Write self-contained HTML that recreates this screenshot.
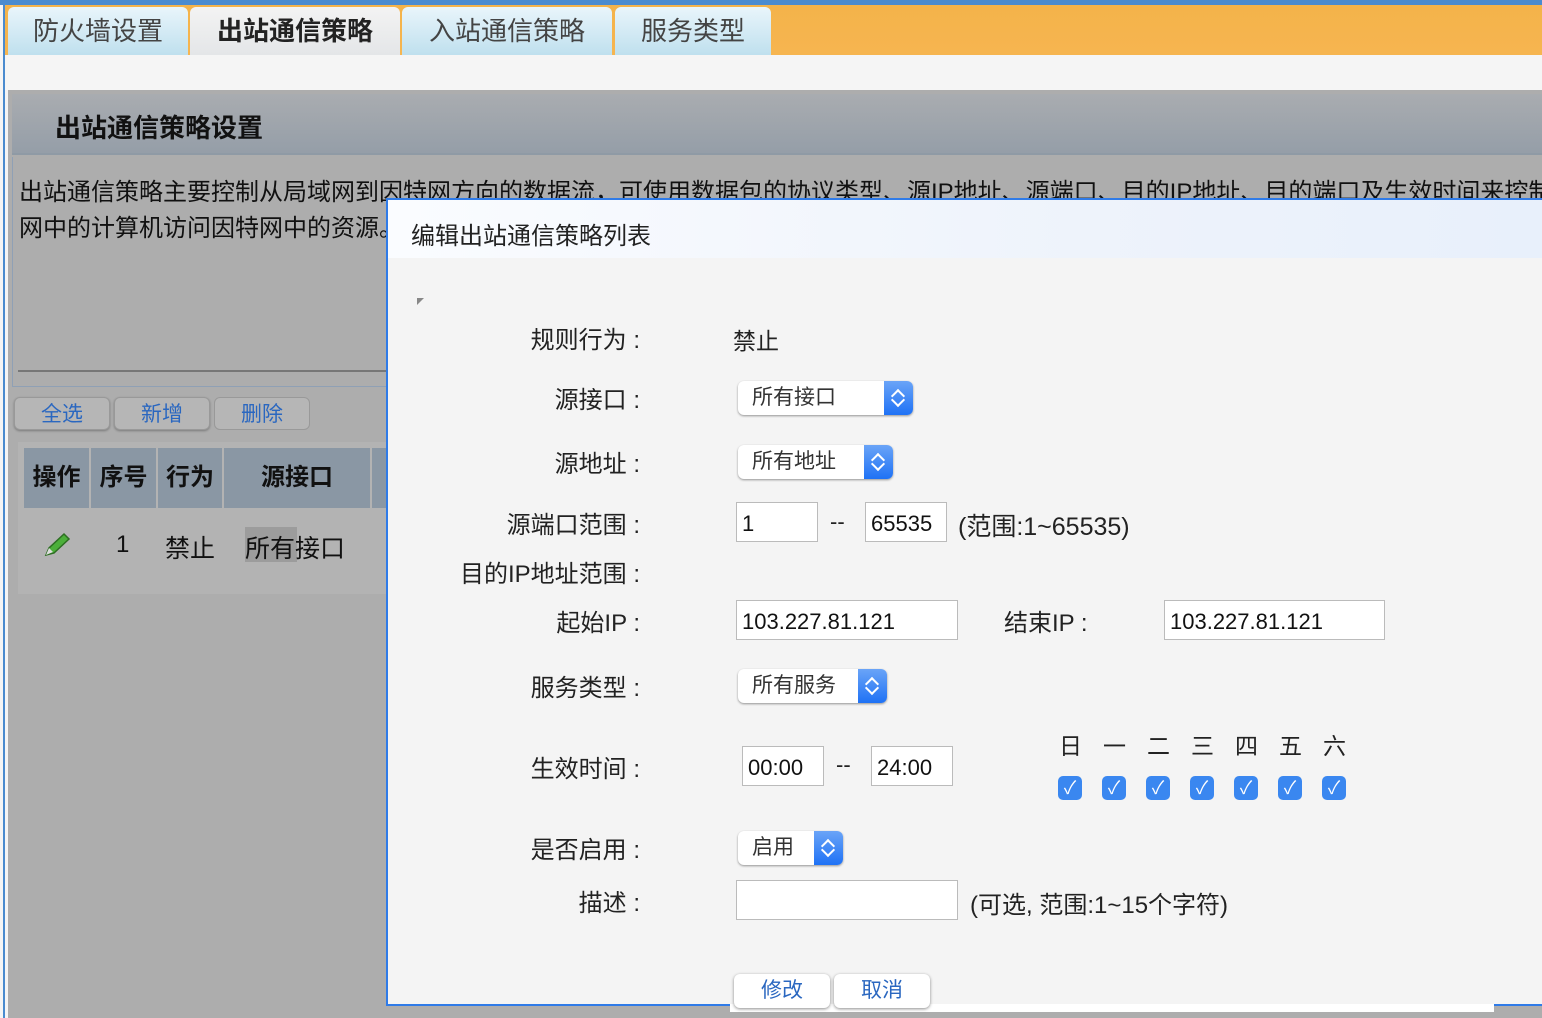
<!DOCTYPE html>
<html><head><meta charset="utf-8"><style>
*{margin:0;padding:0;box-sizing:border-box}
body{width:1542px;height:1018px;overflow:hidden;position:relative;background:#f5f5f5;font-family:"Liberation Sans","Noto Sans CJK SC",sans-serif;color:#222}
.a{position:absolute;white-space:nowrap}
.tab{position:absolute;top:7px;height:48px;border-radius:6px 6px 0 0;background:linear-gradient(#e9f5fb,#bfe0ee);font-size:26px;color:#444;text-align:center;line-height:48px}
.lbl{position:absolute;right:902px;font-size:24px;color:#222;white-space:nowrap}
.sel{position:absolute;height:34px;background:#fff;border-radius:6px;box-shadow:0 1px 2px rgba(0,0,0,.4);font-size:21px;line-height:34px;padding-left:14px;color:#333}
.sel i{position:absolute;right:0;top:0;width:29px;height:34px;border-radius:0 6px 6px 0;background:linear-gradient(#6aa4f7,#1f72f5)}
.sel i:before,.sel i:after{content:"";position:absolute;left:9px;width:8px;height:8px;border:solid #fff;border-width:2px 0 0 2px}
.sel i:before{top:10px;transform:rotate(45deg)}
.sel i:after{top:14px;transform:rotate(225deg)}
.inp{position:absolute;height:40px;background:#fff;border:1px solid #bbb;font-size:22px;line-height:42px;padding-left:5px;color:#111}
.cb{position:absolute;top:776px;width:24px;height:24px;border-radius:5px;background:#3a87f0;color:#fff;font-size:18px;text-align:center;line-height:24px}
.day{position:absolute;top:727px;font-size:23px;color:#222}
.btn{position:absolute;border-radius:6px;font-size:21px;color:#2a67c0;text-align:center}
</style></head><body>
<div class="a" style="left:0;top:0;width:1542px;height:5px;background:#4a8bcf"></div>
<div class="a" style="left:3px;top:0;width:2px;height:1018px;background:#4a8bcf"></div>
<div class="a" style="left:5px;top:5px;width:1537px;height:50px;background:linear-gradient(#f4b34a,#f6b550)"></div>
<div class="tab" style="left:8px;width:180px">防火墙设置</div>
<div class="tab" style="left:190px;width:210px;background:linear-gradient(#f3f3f3,#e4e6e8);color:#222;font-weight:bold">出站通信策略</div>
<div class="tab" style="left:402px;width:210px">入站通信策略</div>
<div class="tab" style="left:615px;width:156px">服务类型</div>

<div class="a" style="left:8px;top:90px;width:1534px;height:928px;background:#adadad"></div>
<div class="a" style="left:12px;top:94px;width:1530px;height:61px;background:linear-gradient(#a9acb0,#959ea8);border-bottom:2px solid #8f9aa5"></div>
<div class="a" style="left:55px;top:108px;font-size:26px;font-weight:bold;color:#111">出站通信策略设置</div>
<div class="a" style="left:12px;top:157px;width:376px;height:230px;border-left:1px solid #8fa0b5;border-bottom:1px solid #8fa0b5"></div>
<div class="a" style="left:19px;top:175px;font-size:24px;color:#111;line-height:36px">出站通信策略主要控制从局域网到因特网方向的数据流，可使用数据包的协议类型、源IP地址、源端口、目的IP地址、目的端口及生效时间来控制<br>网中的计算机访问因特网中的资源。</div>
<div class="a" style="left:18px;top:370px;width:370px;height:2px;background:#777"></div>
<div class="btn" style="left:14px;top:397px;width:96px;height:33px;line-height:33px;background:#b6b6b6;border:1px solid #999;box-shadow:0 1px 2px rgba(0,0,0,.3)">全选</div>
<div class="btn" style="left:114px;top:397px;width:96px;height:33px;line-height:33px;background:#b6b6b6;border:1px solid #999;box-shadow:0 1px 2px rgba(0,0,0,.3)">新增</div>
<div class="btn" style="left:214px;top:397px;width:96px;height:33px;line-height:33px;background:#b6b6b6;border:1px solid #999">删除</div>
<div class="a" style="left:18px;top:442px;width:370px;height:152px;background:#b3b3b3"></div>
<div class="a" style="left:24px;top:448px;width:65px;height:60px;background:#8a97a4;font-size:24px;font-weight:bold;line-height:60px;text-align:center;color:#111">操作</div>
<div class="a" style="left:91px;top:448px;width:65px;height:60px;background:#8a97a4;font-size:24px;font-weight:bold;line-height:60px;text-align:center;color:#111">序号</div>
<div class="a" style="left:158px;top:448px;width:64px;height:60px;background:#8a97a4;font-size:24px;font-weight:bold;line-height:60px;text-align:center;color:#111">行为</div>
<div class="a" style="left:224px;top:448px;width:146px;height:60px;background:#8a97a4;font-size:24px;font-weight:bold;line-height:60px;text-align:center;color:#111">源接口</div>
<div class="a" style="left:372px;top:448px;width:16px;height:60px;background:#8a97a4"></div>
<svg class="a" style="left:42px;top:531px" width="30" height="28"><path d="M4 24 L7 17 L22 3 L27 8 L12 22 Z" fill="#4caf3a" stroke="#2d6e22" stroke-width="1.5"/><path d="M4 24 L7 17 L11 21Z" fill="#ddd"/></svg>
<div class="a" style="left:116px;top:531px;font-size:24px;color:#111">1</div>
<div class="a" style="left:165px;top:529px;font-size:25px;color:#111">禁止</div>
<div class="a" style="left:245px;top:527px;width:52px;height:35px;background:#9c9c9c"></div>
<div class="a" style="left:245px;top:529px;font-size:25px;color:#111">所有接口</div>

<div class="a" style="left:386px;top:198px;width:1160px;height:808px;border:2px solid #2f7be8;border-right:none;background:#f4f4f4"></div>
<div class="a" style="left:388px;top:200px;width:1154px;height:58px;background:linear-gradient(90deg,#fafcff,#eef3fb 60%,#e8f0fb)"></div>
<div class="a" style="left:411px;top:216px;font-size:24px;color:#222">编辑出站通信策略列表</div>
<div class="a" style="left:417px;top:298px;width:0;height:0;border-top:7px solid #888;border-right:7px solid transparent"></div>
<div class="a" style="left:730px;top:1004px;width:764px;height:8px;background:#fff"></div>

<div class="lbl" style="top:320px">规则行为 :</div>
<div class="a" style="left:733px;top:322px;font-size:23px">禁止</div>
<div class="lbl" style="top:380px">源接口 :</div>
<div class="sel" style="left:738px;top:381px;width:175px">所有接口<i></i></div>
<div class="lbl" style="top:444px">源地址 :</div>
<div class="sel" style="left:738px;top:445px;width:155px">所有地址<i></i></div>
<div class="lbl" style="top:505px">源端口范围 :</div>
<div class="inp" style="left:736px;top:502px;width:82px">1</div>
<div class="a" style="left:830px;top:509px;font-size:22px">--</div>
<div class="inp" style="left:865px;top:502px;width:82px">65535</div>
<div class="a" style="left:958px;top:507px;font-size:25px">(范围:1~65535)</div>
<div class="lbl" style="top:554px">目的IP地址范围 :</div>
<div class="lbl" style="top:603px">起始IP :</div>
<div class="inp" style="left:736px;top:600px;width:222px">103.227.81.121</div>
<div class="a" style="left:1004px;top:603px;font-size:24px">结束IP :</div>
<div class="inp" style="left:1164px;top:600px;width:221px">103.227.81.121</div>
<div class="lbl" style="top:668px">服务类型 :</div>
<div class="sel" style="left:738px;top:669px;width:149px">所有服务<i></i></div>
<div class="lbl" style="top:749px">生效时间 :</div>
<div class="inp" style="left:742px;top:746px;width:82px">00:00</div>
<div class="a" style="left:836px;top:752px;font-size:22px">--</div>
<div class="inp" style="left:871px;top:746px;width:82px">24:00</div>
<div class="day" style="left:1059px">日</div><div class="day" style="left:1103px">一</div><div class="day" style="left:1147px">二</div><div class="day" style="left:1191px">三</div><div class="day" style="left:1235px">四</div><div class="day" style="left:1279px">五</div><div class="day" style="left:1323px">六</div>
<div class="cb" style="left:1058px">✓</div><div class="cb" style="left:1102px">✓</div><div class="cb" style="left:1146px">✓</div><div class="cb" style="left:1190px">✓</div><div class="cb" style="left:1234px">✓</div><div class="cb" style="left:1278px">✓</div><div class="cb" style="left:1322px">✓</div>
<div class="lbl" style="top:830px">是否启用 :</div>
<div class="sel" style="left:738px;top:831px;width:105px">启用<i></i></div>
<div class="lbl" style="top:883px">描述 :</div>
<div class="inp" style="left:736px;top:880px;width:222px"></div>
<div class="a" style="left:970px;top:885px;font-size:24px">(可选, 范围:1~15个字符)</div>
<div class="btn" style="left:734px;top:974px;width:96px;height:34px;line-height:34px;background:#fff;box-shadow:0 1px 3px rgba(0,0,0,.45)">修改</div>
<div class="btn" style="left:834px;top:974px;width:96px;height:34px;line-height:34px;background:#fff;box-shadow:0 1px 3px rgba(0,0,0,.45)">取消</div>
</body></html>
